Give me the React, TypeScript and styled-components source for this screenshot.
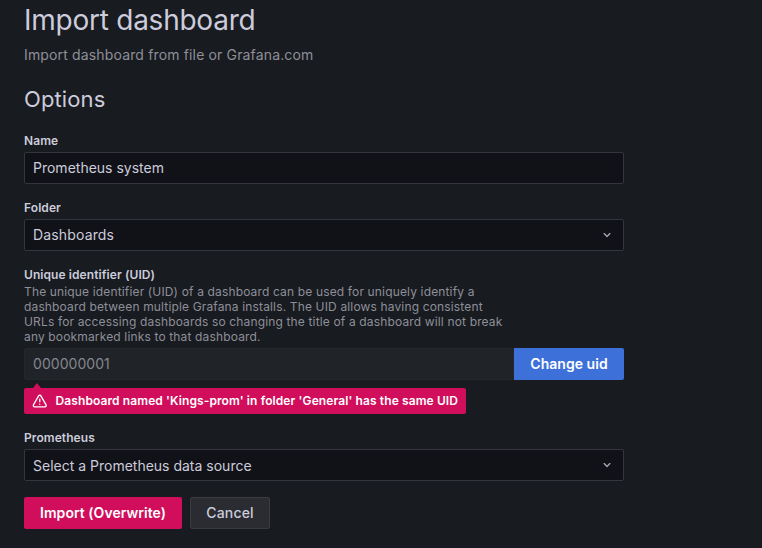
import React from "react";
import styled, { createGlobalStyle } from "styled-components";

const Global = createGlobalStyle`
  * { box-sizing: border-box; }
  body { margin: 0; background: #181b1f; overflow: hidden; }
`;
const Page = styled.main`
  width: 762px;
  height: 548px;
  padding: 4px 24px 0;
  background: #181b1f;
  color: #ccccdc;
  font: 400 14px/22px Inter, sans-serif;
  letter-spacing: 0.15px;
`;
const Title = styled.h1`
  margin: 0;
  font-size: 28px;
  font-weight: 400;
  line-height: 32px;
  letter-spacing: -0.25px;
`;
const Subtitle = styled.p`
  margin: 8px 0 0;
  color: #8e8f9a;
`;
const Section = styled.h2`
  margin: 20px 0 0;
  height: 26px;
  font-size: 22px;
  font-weight: 400;
  line-height: 26px;
  letter-spacing: 0.12px;
`;
const Form = styled.form`
  width: 600px;
  padding-top: 21px;
`;
const Field = styled.div`
  margin-bottom: 16px;
`;
const Label = styled.div`
  height: 15px;
  margin-bottom: 4px;
  font-size: 12px;
  font-weight: 600;
  line-height: 15px;
  letter-spacing: 0.08px;
`;
const Description = styled.p`
  margin: -2px 0 4px;
  color: #8e8f9a;
  font-size: 12px;
  line-height: 15px;
  white-space: nowrap;
`;
const Control = styled.div<{ $disabled?: boolean; $spacing?: number }>`
  display: flex;
  flex: 1;
  align-items: center;
  justify-content: space-between;
  height: 32px;
  padding: 0 8px;
  border: 1px solid ${(p) => (p.$disabled ? "#24272b" : "#34363d")};
  border-radius: 2px;
  background: ${(p) => (p.$disabled ? "#202327" : "#111217")};
  color: ${(p) => (p.$disabled ? "#85868f" : "#ccccdc")};
  letter-spacing: ${(p) => p.$spacing ?? 0}px;
`;
const Placeholder = styled.span`
  padding-top: 2px;
`;
const Row = styled.div<{ $gap?: number }>`
  display: flex;
  gap: ${(p) => p.$gap ?? 0}px;
`;
const Button = styled.button<{ $tone: string; $width: number; $joined?: boolean }>`
  width: ${(p) => p.$width}px;
  height: 32px;
  padding: 0;
  border: ${(p) => (p.$tone === "#2a2c31" ? "1px solid #393b41" : "0")};
  border-radius: ${(p) => (p.$joined ? "0 2px 2px 0" : "2px")};
  background: ${(p) => p.$tone};
  color: ${(p) => (p.$tone === "#2a2c31" ? "#ccccdc" : "#fff")};
  font: ${(p) => (p.$tone === "#2a2c31" ? 500 : 600)} 14px/30px Inter, sans-serif;
  letter-spacing: ${(p) => (p.$tone === "#2a2c31" ? 0.15 : 0.04)}px;
  white-space: nowrap;
`;
const ErrorMessage = styled.div`
  position: relative;
  display: flex;
  align-items: center;
  gap: 8px;
  width: 442px;
  height: 26px;
  margin-top: 8px;
  padding: 0 8px;
  border-radius: 2px;
  background: #d10e5c;
  color: #fff;
  font-size: 12px;
  font-weight: 600;
  letter-spacing: 0.1px;
  white-space: nowrap;
  &::before {
    content: "";
    position: absolute;
    left: 9px;
    top: -5px;
    border: solid transparent;
    border-width: 0 4px 5px;
    border-bottom-color: #d10e5c;
  }
`;

const Chevron = () => (
  <svg width="16" height="16" viewBox="0 0 24 24" fill="#a7a8b4">
    <path d="M17 9.17a1 1 0 0 0-1.41 0L12 12.71 8.46 9.17a1 1 0 0 0-1.41 1.42l4.24 4.24a1 1 0 0 0 1.42 0L17 10.59a1 1 0 0 0 0-1.42Z" />
  </svg>
);
const Warning = () => (
  <svg width="16" height="16" viewBox="0 0 24 24" fill="#fff">
    <path d="M12 16a1 1 0 1 0 1 1 1 1 0 0 0-1-1Zm10.67 1.47-8.05-14a3 3 0 0 0-5.24 0l-8 14A3 3 0 0 0 3.94 22h16.12a3 3 0 0 0 2.61-4.53Zm-1.73 2a1 1 0 0 1-.88.51H3.94a1 1 0 0 1-.88-.51 1 1 0 0 1 0-1l8-14a1 1 0 0 1 1.78 0l8.05 14a1 1 0 0 1 .05 1.02ZM12 8a1 1 0 0 0-1 1v4a1 1 0 0 0 2 0V9a1 1 0 0 0-1-1Z" />
  </svg>
);

export default function App() {
  return (
    <>
      <Global />
      <Page>
        <Title>Import dashboard</Title>
        <Subtitle>Import dashboard from file or Grafana.com</Subtitle>
        <Section>Options</Section>
        <Form>
          <Field>
            <Label>Name</Label>
            <Control>Prometheus system</Control>
          </Field>
          <Field>
            <Label>Folder</Label>
            <Control $spacing={0.15}>Dashboards<Chevron /></Control>
          </Field>
          <Field>
            <Label>Unique identifier (UID)</Label>
            <Description>
              The unique identifier (UID) of a dashboard can be used for uniquely identify a<br />
              dashboard between multiple Grafana installs. The UID allows having consistent<br />
              URLs for accessing dashboards so changing the title of a dashboard will not break<br />
              any bookmarked links to that dashboard.
            </Description>
            <Row>
              <Control $disabled $spacing={0.05}>000000001</Control>
              <Button type="button" $tone="#3d71d9" $width={110} $joined>Change uid</Button>
            </Row>
            <ErrorMessage>
              <Warning />
              Dashboard named 'Kings-prom' in folder 'General' has the same UID
            </ErrorMessage>
          </Field>
          <Field>
            <Label>Prometheus</Label>
            <Control><Placeholder>Select a Prometheus data source</Placeholder><Chevron /></Control>
          </Field>
          <Row $gap={8}>
            <Button type="button" $tone="#d10e5c" $width={158}>Import (Overwrite)</Button>
            <Button type="button" $tone="#2a2c31" $width={80}>Cancel</Button>
          </Row>
        </Form>
      </Page>
    </>
  );
}
